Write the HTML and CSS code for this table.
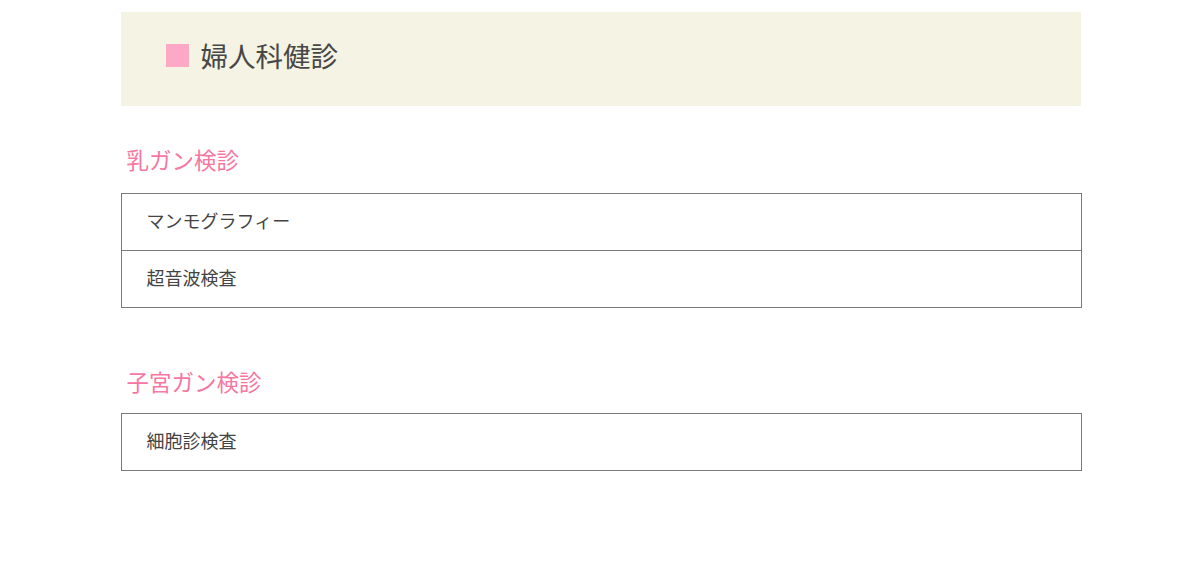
FILE: index.html
```html
<!DOCTYPE html>
<html lang="ja">
<head>
<meta charset="utf-8">
<link rel="stylesheet" href="styles.css">
</head>
<body>
<div class="page">
  <div class="header">
    <span class="mark"></span>
    <h1 class="title">婦人科健診</h1>
  </div>
  <h2 class="sec">乳ガン検診</h2>
  <div class="table">
    <div class="row">マンモグラフィー</div>
    <div class="row">超音波検査</div>
  </div>
  <h2 class="sec sec2">子宮ガン検診</h2>
  <div class="table">
    <div class="row">細胞診検査</div>
  </div>
</div>
</body>
</html>
```

FILE: styles.css
```css
html, body {
  margin: 0;
  padding: 0;
  background: #fff;
}
body {
  font-family: "Noto Sans CJK JP", "Noto Sans", sans-serif;
  color: #444;
}
.page {
  width: 960px;
  margin: 0 auto;
  padding-top: 12px;
  padding-left: 1px;
}
.header {
  background: #f5f3e3;
  height: 94px;
  display: flex;
  align-items: center;
  padding-left: 45px;
  padding-bottom: 7px;
  box-sizing: border-box;
}
.mark {
  width: 23px;
  height: 23px;
  background: #fda9c6;
  margin-right: 12px;
}
.title {
  margin: 0;
  font-size: 27.5px;
  font-weight: 400;
  color: #474747;
  line-height: 1;
}
.sec {
  margin: 0;
  font-size: 22.5px;
  font-weight: 400;
  color: #f577a2;
  line-height: 32px;
  padding: 37px 0 0 6px;
  height: 34px;
  margin-bottom: 16px;
  box-sizing: content-box;
}
.sec2 {
  padding-top: 57px;
  height: 32px;
}
.table {
  border: 1px solid #7a7a7a;
  margin-right: -1px;
}
.row {
  height: 56px;
  display: flex;
  align-items: center;
  padding-left: 25px;
  padding-bottom: 4px;
  box-sizing: border-box;
  font-size: 18px;
  color: #444;
}
.row + .row {
  border-top: 1px solid #7a7a7a;
  height: 57px;
}
```
